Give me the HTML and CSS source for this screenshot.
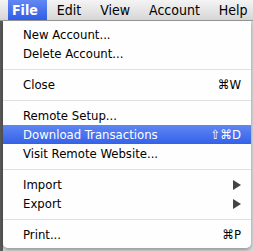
FILE: index.html
```html
<!DOCTYPE html>
<html lang="en">
<head>
  <meta charset="UTF-8" />
  <title>File Menu</title>
  <link rel="stylesheet" href="styles.css">
</head>
<body>

  <div class="menu_bar">
    <div class="bar-item bar-item-first active">File</div>
    <div class="bar-item">Edit</div>
    <div class="bar-item">View</div>
    <div class="bar-item">Account</div>
    <div class="bar-item">Help</div>
  </div>

  <div class="dropdown">
    <div class="menu-row"><span>New Account...</span></div>
    <div class="menu-row"><span>Delete Account...</span></div>
    <div class="separator"></div>
    <div class="menu-row"><span>Close</span><span class="shortcut">&#8984;W</span></div>
    <div class="separator"></div>
    <div class="menu-row"><span>Remote Setup...</span></div>
    <div class="menu-row selected"><span>Download Transactions</span><span class="shortcut">&#8679;&#8984;D</span></div>
    <div class="menu-row"><span>Visit Remote Website...</span></div>
    <div class="separator"></div>
    <div class="menu-row"><span>Import</span><span class="arrow"></span></div>
    <div class="menu-row"><span>Export</span><span class="arrow"></span></div>
    <div class="separator"></div>
    <div class="menu-row"><span>Print...</span><span class="shortcut">&#8984;P</span></div>
  </div>

</body>
</html>
```

FILE: styles.css
```css
body {
  margin: 0;
  padding: 0;
  width: 253px;
  height: 251px;
  overflow: hidden;
  background: linear-gradient(to right, #5a5a5a 0, #5a5a5a 3px, #dcdcdc 3px);
  font-family: "DejaVu Sans Condensed", "DejaVu Sans", sans-serif;
}

.menu_bar {
  display: flex;
  height: 20px;
  padding-left: 8px;
  background: linear-gradient(#f4f4f4, #d6d6d6);
  border-bottom: 1px solid #9a9a9a;
  align-items: stretch;
  white-space: nowrap;
  overflow: hidden;
}

.bar-item {
  padding: 0 9px 0 10px;
  font-size: 14px;
  line-height: 20px;
  color: #000;
}

.bar-item-first {
  padding-left: 4px;
}

.bar-item.active {
  font-weight: bold;
  color: #fff;
  background: linear-gradient(#6288f2, #2f5de6);
}

.dropdown {
  margin-left: 3px;
  width: 248px;
  height: 223px;
  padding-top: 4px;
  background: rgba(255, 255, 255, 0.97);
  border-radius: 0 0 5px 5px;
  box-shadow: 0 2px 4px rgba(0, 0, 0, 0.35);
}

.menu-row {
  display: flex;
  justify-content: space-between;
  align-items: center;
  height: 19px;
  padding: 0 10px 0 20px;
  font-size: 13px;
  color: #000;
}

.menu-row.selected {
  color: #fff;
  background: linear-gradient(#5f86f3, #3462e8);
}

.shortcut {
  font-size: 13px;
}

.arrow {
  width: 0;
  height: 0;
  border-top: 5px solid transparent;
  border-bottom: 5px solid transparent;
  border-left: 8px solid #444;
}

.separator {
  height: 1px;
  margin: 6px 0 5px 0;
  background: #e0e0e0;
}
```
